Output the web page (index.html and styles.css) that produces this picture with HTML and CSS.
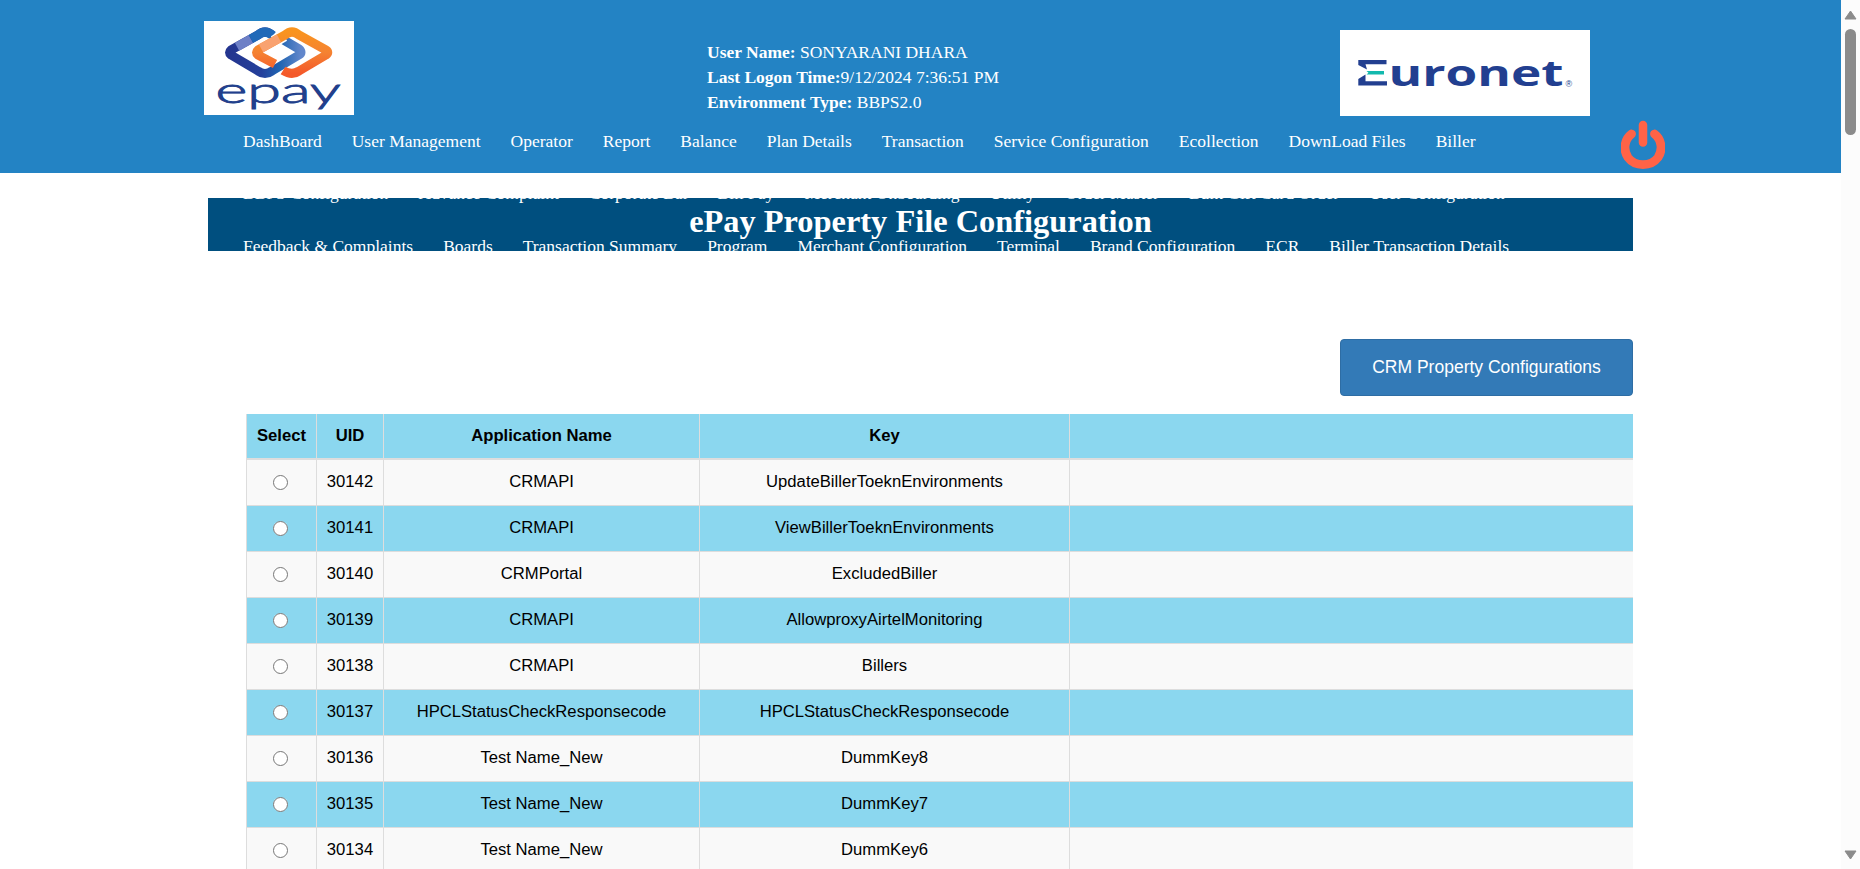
FILE: index.html
```html
<!DOCTYPE html>
<html lang="en">
<head>
<meta charset="utf-8">
<title>ePay Property File Configuration</title>
<link rel="stylesheet" href="styles.css">
</head>
<body>
<div class="page">
  <header class="header">
    <div class="brand-row">
      <svg class="logo-epay" viewBox="0 0 150 94" role="img" aria-label="epay">
        <defs>
          <linearGradient id="blueRing" x1="0" y1="0" x2="1" y2="0">
            <stop offset="0" stop-color="#24358f"/><stop offset=".45" stop-color="#24409b"/><stop offset=".7" stop-color="#1f64b2"/><stop offset="1" stop-color="#6287cb"/>
          </linearGradient>
          <linearGradient id="orangeRing" x1="0" y1="0" x2="0" y2="1">
            <stop offset="0" stop-color="#f9941f"/><stop offset=".5" stop-color="#f58232"/><stop offset="1" stop-color="#f4592a"/>
          </linearGradient>
        </defs>
        <rect width="150" height="94" fill="#fff"/>
        <g fill="none" stroke-width="9" stroke-linejoin="round">
          <path stroke="url(#blueRing)" d="M68 14 Q61 8 54 14 L27 29 Q24 31.500 27 34 L54 50 Q61 55 68 50 L95 34 Q99 31.500 95 28 L78 18"/>
          <path stroke="#6d7fc6" d="M33 25.800 L47 18"/>
          <path stroke="#2169b8" d="M47 18 L54 14 Q61 8 69 14.500"/>
          <path stroke="#fff" stroke-width="12" d="M70 20.500 L80 14.500"/>
          <path stroke="url(#orangeRing)" d="M71 43 L54 34 Q51 31.500 54 29 L81 14 Q88 8 95 14 L122 29 Q125.500 31.500 122 34 L95 50 Q88 55 79 49.500"/>
          <path stroke="#f9a270" d="M57 27.300 L75 17.400"/>
        </g>
        <text x="11.500" y="82" textLength="125" lengthAdjust="spacingAndGlyphs" class="epay-word">epay</text>
      </svg>
      <div class="session">
        <div><b>User Name:</b> SONYARANI DHARA</div>
        <div><b>Last Logon Time:</b>9/12/2024 7:36:51 PM</div>
        <div><b>Environment Type:</b> BBPS2.0</div>
      </div>
      <svg class="logo-euronet" viewBox="0 0 250 86" role="img" aria-label="Euronet">
        <rect width="250" height="86" fill="#fff"/>
        <path fill="#223f90" d="M18.300 30H46.500V34.200H25.500L27 39.500L18.300 35ZM18.300 55.500H47V51.300H25.500V44.500L18.300 49Z"/>
        <path fill="#12b9ae" d="M26.500 41H44V44.500H26.500L28.500 42.700Z"/>
        <text x="48.500" y="55.500" textLength="175" lengthAdjust="spacingAndGlyphs" class="euronet-word">uronet</text>
        <text x="225.500" y="57" class="euronet-mark">®</text>
      </svg>
    </div>
    <div class="menu-row">
      <nav class="menu">
        <ul class="menu-line">
          <li>DashBoard</li><li>User Management</li><li>Operator</li><li>Report</li><li>Balance</li><li>Plan Details</li><li>Transaction</li><li>Service Configuration</li><li>Ecollection</li><li>DownLoad Files</li><li>Biller</li>
        </ul>
        <ul class="menu-line">
          <li>BBPS Configuration</li><li>Advance Complaint</li><li>Corporate Bal</li><li>Bill Pay</li><li>Merchant Onboarding</li><li>Utility</li><li>Order Master</li><li>Bulk Gift Card Order</li><li>User Configuration</li>
        </ul>
        <ul class="menu-line">
          <li>Feedback &amp; Complaints</li><li>Boards</li><li>Transaction Summary</li><li>Program</li><li>Merchant Configuration</li><li>Terminal</li><li>Brand Configuration</li><li>ECR</li><li>Biller Transaction Details</li>
        </ul>
      </nav>
      <svg class="power" viewBox="0 0 44 50" role="img" aria-label="Log out">
        <g fill="none" stroke="#ff6347" stroke-linecap="round">
          <path stroke-width="8.800" d="M10.500 14C2.500 20 2.500 31 7 37.500C14 47 30 47 37 37.500C41.500 31 41.500 20 33.500 14"/>
          <path stroke-width="8.500" d="M22 5V22.500"/>
        </g>
      </svg>
    </div>
  </header>
  <main class="content">
    <h1 class="banner">ePay Property File Configuration</h1>
    <div class="actions"><button class="btn" type="button">CRM Property Configurations</button></div>
    <table class="grid">
      <colgroup><col class="c-select"><col class="c-uid"><col class="c-app"><col class="c-key"><col></colgroup>
      <thead><tr><th>Select</th><th>UID</th><th>Application Name</th><th>Key</th><th></th></tr></thead>
      <tbody>
        <tr><td><input type="radio" name="row"></td><td>30142</td><td>CRMAPI</td><td>UpdateBillerToeknEnvironments</td><td></td></tr>
        <tr><td><input type="radio" name="row"></td><td>30141</td><td>CRMAPI</td><td>ViewBillerToeknEnvironments</td><td></td></tr>
        <tr><td><input type="radio" name="row"></td><td>30140</td><td>CRMPortal</td><td>ExcludedBiller</td><td></td></tr>
        <tr><td><input type="radio" name="row"></td><td>30139</td><td>CRMAPI</td><td>AllowproxyAirtelMonitoring</td><td></td></tr>
        <tr><td><input type="radio" name="row"></td><td>30138</td><td>CRMAPI</td><td>Billers</td><td></td></tr>
        <tr><td><input type="radio" name="row"></td><td>30137</td><td>HPCLStatusCheckResponsecode</td><td>HPCLStatusCheckResponsecode</td><td></td></tr>
        <tr><td><input type="radio" name="row"></td><td>30136</td><td>Test Name_New</td><td>DummKey8</td><td></td></tr>
        <tr><td><input type="radio" name="row"></td><td>30135</td><td>Test Name_New</td><td>DummKey7</td><td></td></tr>
        <tr><td><input type="radio" name="row"></td><td>30134</td><td>Test Name_New</td><td>DummKey6</td><td></td></tr>
      </tbody>
    </table>
  </main>
</div>
<div class="scrollbar">
  <svg width="13" height="10" viewBox="0 0 13 10"><path fill="#8b8b8b" stroke="#8b8b8b" stroke-linejoin="round" d="M6.500 1L12 9H1Z"/></svg>
  <div class="thumb"></div>
  <svg class="down" width="13" height="10" viewBox="0 0 13 10"><path fill="#8b8b8b" stroke="#8b8b8b" stroke-linejoin="round" d="M6.500 9L12 1H1Z"/></svg>
</div>
</body>
</html>
```
FILE: styles.css
```css
* { box-sizing: border-box; }

body {
  margin: 0;
  height: 869px;
  overflow: hidden;
  display: flex;
  background: #fff;
  font-family: "Liberation Sans", Arial, sans-serif;
}

.page {
  width: 1841px;
  height: 869px;
  overflow: hidden;
}

/* Header: fixed height, long menus spill over the content below */
.header {
  position: relative;
  z-index: 1;
  height: 173px;
  background: #2383c4;
  color: #fff;
  font: 17.5px/25px "Liberation Serif", "Times New Roman", serif;
}

.brand-row {
  display: flex;
  align-items: flex-start;
  height: 116px;
  padding-left: 204px;
}

.logo-epay {
  width: 150px;
  height: 94px;
  margin-top: 21px;
}

.epay-word {
  font: 300 35px Lato, sans-serif;
  fill: #213f8c;
  stroke: #213f8c;
  stroke-width: .9px;
}

.session {
  width: 633px;
  margin-left: 353px;
  margin-top: 40px;
}

.logo-euronet {
  width: 250px;
  height: 86px;
  margin-top: 30px;
}

.euronet-word {
  font: 700 35px "Open Sans", sans-serif;
  fill: #223f90;
}

.euronet-mark {
  font: 9px "Liberation Sans", sans-serif;
  fill: #223f90;
}

.menu-row {
  display: flex;
  align-items: flex-start;
  padding-left: 228px;
}

.menu { width: 1393px; }

.menu-line {
  display: flex;
  margin: 0;
  padding: 13px 0 14px;
  list-style: none;
  white-space: nowrap;
}

.menu-line:nth-child(2) { padding-bottom: 15px; }

.menu-line li { padding: 0 15px; }

.power {
  width: 44px;
  height: 50px;
  margin-top: 4px;
}

/* Content */
.content {
  width: 1425px;
  margin-left: 208px;
  padding-top: 25px;
}

.banner {
  height: 53px;
  margin: 0;
  background: #004f7f;
  color: #fff;
  text-align: center;
  font: bold 32.400px/46px "Liberation Serif", "Times New Roman", serif;
}

.actions {
  display: flex;
  justify-content: flex-end;
  padding: 88px 0 18px;
}

.btn {
  width: 293px;
  height: 57px;
  padding: 0;
  border: 1px solid #2e6da4;
  border-radius: 4px;
  background: #337ab7;
  color: #fff;
  font: 17.500px "Liberation Sans", Arial, sans-serif;
}

.grid {
  width: 1387px;
  margin-left: 38px;
  table-layout: fixed;
  border-collapse: separate;
  border-spacing: 0;
  color: #000;
  font-size: 16.650px;
  line-height: 24px;
  text-align: center;
}

.c-select { width: 70px; }
.c-uid { width: 67px; }
.c-app { width: 316px; }
.c-key { width: 370px; }

.grid th,
.grid td {
  height: 46px;
  padding: 0 0 1px;
  border-left: 1px solid #ddd;
  border-bottom: 1px solid #ddd;
  vertical-align: middle;
}

.grid th {
  border-bottom-width: 2px;
  background: #8bd7ef;
}

.grid tbody tr:nth-child(odd) { background: #f9f9f9; }
.grid tbody tr:nth-child(even) { background: #8bd7ef; }

.grid input {
  display: block;
  width: 15px;
  height: 15px;
  margin: 1px auto 0 26px;
}

/* Window scrollbar */
.scrollbar {
  display: flex;
  flex-direction: column;
  align-items: center;
  width: 19px;
  height: 869px;
  padding: 10px 0 9px;
  background: #fcfcfc;
}

.thumb {
  width: 11px;
  height: 106px;
  margin-top: 9px;
  border-radius: 6px;
  background: #8b8b8b;
}

.down { margin-top: auto; }
```
